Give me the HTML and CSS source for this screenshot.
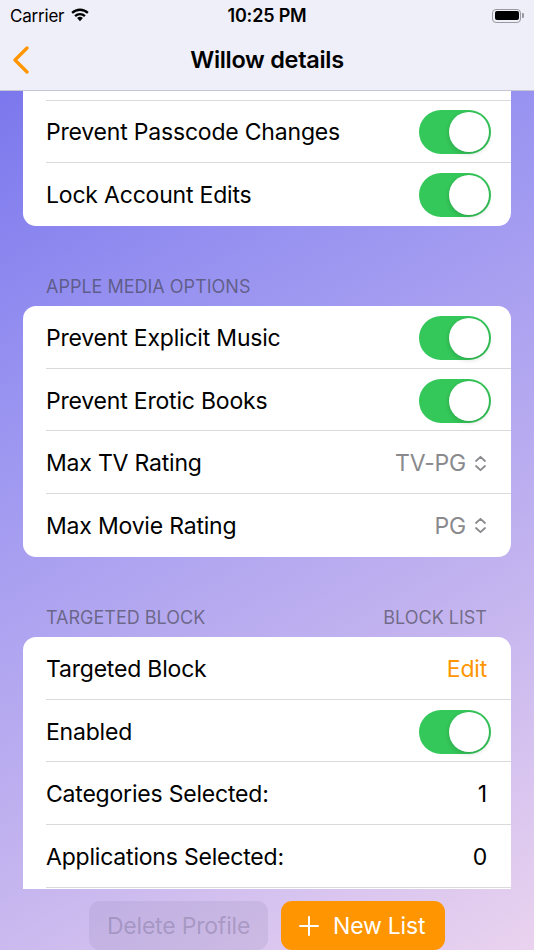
FILE: index.html
```html
<!DOCTYPE html>
<html lang="en">
<head>
<meta charset="utf-8">
<title>Willow details</title>
<link rel="stylesheet" href="styles.css">
</head>
<body>
<div class="screen">
  <header class="topbar">
    <div class="status">
      <div class="status-left">
        <span class="carrier">Carrier</span>
        <svg class="wifi" width="20" height="15" viewBox="0 0 20 15"><path d="M10 14.2 L7.1 11.1 A4.2 4.2 0 0 1 12.9 11.1 Z" fill="#000"/><path d="M4.3 8.2 A8.2 8.2 0 0 1 15.7 8.2 L14.1 9.9 A5.9 5.9 0 0 0 5.9 9.9 Z" fill="#000"/><path d="M1.3 5.1 A12.5 12.5 0 0 1 18.7 5.1 L17.1 6.8 A10.2 10.2 0 0 0 2.9 6.8 Z" fill="#000"/></svg>
      </div>
      <span class="time">10:25 PM</span>
      <div class="status-right">
        <div class="battery"><div class="battery-fill"></div></div>
        <div class="battery-tip"></div>
      </div>
    </div>
    <div class="nav">
      <svg class="back" width="18" height="28" viewBox="0 0 18 28"><path d="M15 2 L3 14 L15 26" fill="none" stroke="#ff9500" stroke-width="3.2" stroke-linecap="round" stroke-linejoin="round"/></svg>
      <h1 class="title">Willow details</h1>
    </div>
  </header>

  <main class="scroll">
    <div class="scroll-content">
      <section class="card">
        <div class="row" aria-hidden="true"></div>
        <div class="row"><span class="label">Prevent Passcode Changes</span><span class="toggle"><span class="knob"></span></span></div>
        <div class="row last"><span class="label">Lock Account Edits</span><span class="toggle"><span class="knob"></span></span></div>
      </section>

      <div class="section-header"><span>Apple Media Options</span></div>
      <section class="card">
        <div class="row"><span class="label">Prevent Explicit Music</span><span class="toggle"><span class="knob"></span></span></div>
        <div class="row"><span class="label">Prevent Erotic Books</span><span class="toggle"><span class="knob"></span></span></div>
        <div class="row"><span class="label">Max TV Rating</span><span class="picker">TV-PG<svg class="updown" width="13" height="17" viewBox="0 0 13 17"><path d="M2 6 L6.5 1.8 L11 6" fill="none" stroke="#8a8a8e" stroke-width="1.8" stroke-linecap="round" stroke-linejoin="round"/><path d="M2 11 L6.5 15.2 L11 11" fill="none" stroke="#8a8a8e" stroke-width="1.8" stroke-linecap="round" stroke-linejoin="round"/></svg></span></div>
        <div class="row last"><span class="label">Max Movie Rating</span><span class="picker">PG<svg class="updown" width="13" height="17" viewBox="0 0 13 17"><path d="M2 6 L6.5 1.8 L11 6" fill="none" stroke="#8a8a8e" stroke-width="1.8" stroke-linecap="round" stroke-linejoin="round"/><path d="M2 11 L6.5 15.2 L11 11" fill="none" stroke="#8a8a8e" stroke-width="1.8" stroke-linecap="round" stroke-linejoin="round"/></svg></span></div>
      </section>

      <div class="section-header split"><span>Targeted Block</span><span>Block List</span></div>
      <section class="card">
        <div class="row"><span class="label">Targeted Block</span><span class="action">Edit</span></div>
        <div class="row"><span class="label">Enabled</span><span class="toggle"><span class="knob"></span></span></div>
        <div class="row"><span class="label">Categories Selected:</span><span class="value">1</span></div>
        <div class="row"><span class="label">Applications Selected:</span><span class="value">0</span></div>
        <div class="row" aria-hidden="true"></div>
      </section>
    </div>
  </main>

  <footer class="bottombar">
    <button class="btn btn-disabled" disabled>Delete Profile</button>
    <button class="btn btn-primary"><svg class="plus" width="20" height="20" viewBox="0 0 20 20"><path d="M10 1 V19 M1 10 H19" stroke="#fff" stroke-width="2" stroke-linecap="round"/></svg>New List</button>
  </footer>
</div>
</body>
</html>
```

FILE: styles.css
```css
* { box-sizing: border-box; }

html, body {
  margin: 0;
  padding: 0;
}

body {
  width: 534px;
  height: 950px;
  overflow: hidden;
  font-family: Inter, "Noto Sans", "Liberation Sans", sans-serif;
  color: #000;
}

.screen {
  width: 534px;
  height: 950px;
  display: flex;
  flex-direction: column;
  background: linear-gradient(150deg, #7370ec 0%, #9c96f1 35%, #c4b4ef 70%, #ead3ef 100%);
  overflow: hidden;
}

/* ---------- top bars ---------- */
.topbar {
  flex: 0 0 auto;
  background: #efeff9;
  border-bottom: 1px solid #c6c5d6;
}

.status {
  height: 29px;
  display: grid;
  grid-template-columns: 1fr auto 1fr;
  align-items: center;
  padding: 2px 10px 0 10px;
}

.status-left {
  display: flex;
  align-items: center;
  gap: 6px;
}

.carrier {
  font-size: 17px;
  line-height: 20px;
  letter-spacing: -0.2px;
}

.wifi { margin-top: -2px; }

.time {
  font-size: 18px;
  line-height: 20px;
  font-weight: 600;
  letter-spacing: -0.2px;
}

.status-right {
  display: flex;
  justify-content: flex-end;
  align-items: center;
  gap: 1px;
}

.battery {
  width: 29px;
  height: 14px;
  border: 1.3px solid #9a9aa0;
  border-radius: 4px;
  padding: 1.5px;
}

.battery-fill {
  width: 100%;
  height: 100%;
  background: #000;
  border-radius: 2px;
}

.battery-tip {
  width: 2px;
  height: 5px;
  background: #9a9aa0;
  border-radius: 0 1px 1px 0;
}

.nav {
  height: 61px;
  display: flex;
  align-items: center;
  justify-content: center;
  padding: 0 50px;
  position: relative;
}

.back {
  position: absolute;
  left: 12px;
  top: 17px;
}

.title {
  margin: 0;
  font-size: 23.5px;
  line-height: 30px;
  font-weight: 600;
  letter-spacing: -0.3px;
  white-space: nowrap;
}

/* ---------- scroll area ---------- */
.scroll {
  flex: 1 1 auto;
  overflow: hidden;
  padding: 0 23px;
}

/* list is scrolled: first row is mostly hidden under the nav bar */
.scroll-content {
  margin-top: -53px;
}

.card {
  background: #fff;
  border-radius: 13px;
  overflow: hidden;
}

.row {
  position: relative;
  height: 62.6px;
  display: flex;
  align-items: center;
  justify-content: space-between;
  padding: 1px 20px 0 23px;
  font-size: 23px;
  line-height: 28px;
  letter-spacing: -0.2px;
}

.row::after {
  content: "";
  position: absolute;
  left: 23px;
  right: 0;
  bottom: 0;
  height: 1px;
  background: #d9d9de;
}

.row.last::after { display: none; }

.label { white-space: nowrap; }

.toggle {
  width: 72px;
  height: 44px;
  border-radius: 22px;
  background: #34c759;
  display: flex;
  align-items: center;
  justify-content: flex-end;
  padding: 0 2px;
}

.knob {
  width: 40px;
  height: 40px;
  border-radius: 50%;
  background: #fff;
  box-shadow: 0 2px 5px rgba(0, 0, 0, 0.14), 0 0 0 0.5px rgba(0, 0, 0, 0.05);
}

.picker {
  display: flex;
  align-items: center;
  gap: 8px;
  color: #8a8a8e;
  margin-right: 4px;
}

.action {
  color: #ff9500;
  margin-right: 4px;
}

.value {
  margin-right: 4px;
}

.section-header {
  display: flex;
  justify-content: space-between;
  padding: 50.5px 24px 8px 23px;
  font-size: 18px;
  line-height: 22px;
  text-transform: uppercase;
  color: rgba(60, 60, 67, 0.6);
  letter-spacing: 0;
}

/* ---------- bottom bar ---------- */
.bottombar {
  flex: 0 0 61px;
  display: flex;
  justify-content: center;
  align-items: flex-start;
  gap: 13px;
  padding-top: 12px;
}

.btn {
  height: 49px;
  border: none;
  border-radius: 11px;
  font-family: inherit;
  font-size: 23px;
  line-height: 28px;
  letter-spacing: -0.2px;
  padding: 0 18px;
  display: flex;
  align-items: center;
  white-space: nowrap;
}

.btn-disabled {
  width: 179px;
  justify-content: center;
  background: rgba(118, 110, 150, 0.13);
  color: rgba(90, 80, 120, 0.3);
}

.btn-primary {
  width: 164px;
  background: #ff9500;
  color: #fff;
  gap: 14px;
}

.plus { flex: 0 0 auto; }
```
